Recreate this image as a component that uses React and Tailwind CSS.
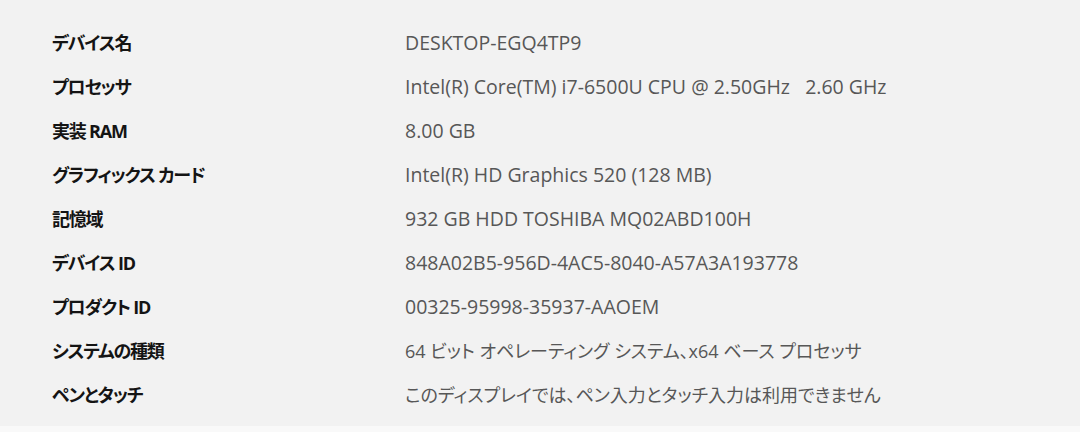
import React from "react";

const rows = [
  { k: "デバイス名", v: "DESKTOP-EGQ4TP9" },
  { k: "プロセッサ", v: "Intel(R) Core(TM) i7-6500U CPU @ 2.50GHz   2.60 GHz" },
  { k: "実装 RAM", v: "8.00 GB" },
  { k: "グラフィックス カード", v: "Intel(R) HD Graphics 520 (128 MB)" },
  { k: "記憶域", v: "932 GB HDD TOSHIBA MQ02ABD100H" },
  { k: "デバイス ID", v: "848A02B5-956D-4AC5-8040-A57A3A193778" },
  { k: "プロダクト ID", v: "00325-95998-35937-AAOEM" },
  { k: "システムの種類", v: "64 ビット オペレーティング システム、x64 ベース プロセッサ", jp: true },
  { k: "ペンとタッチ", v: "このディスプレイでは、ペン入力とタッチ入力は利用できません", jp: true },
];

function Row({ k, v, jp }) {
  return (
    <div className="flex items-center h-[44px]">
      <div className="w-[353px] shrink-0 text-[18px] font-bold text-[#141414] tracking-[-1.2px] [font-feature-settings:'palt'] font-['Open_Sans','Noto_Sans_CJK_JP',sans-serif]">
        {k}
      </div>
      <div
        className={
          jp
            ? "text-[18px] text-[#575757] whitespace-pre [font-feature-settings:'palt'] font-['Open_Sans','Noto_Sans_CJK_JP',sans-serif]"
            : "text-[19.5px] text-[#575757] whitespace-pre font-['Open_Sans','Noto_Sans_CJK_JP',sans-serif]"
        }
      >
        {v}
      </div>
    </div>
  );
}

export default function App() {
  return (
    <div className="w-[1080px] h-[432px] bg-[#f2f2f2] flex flex-col overflow-hidden">
      <div className="flex-1 pt-[21px] pl-[52px]">
        {rows.map((r) => (
          <Row key={r.k} {...r} />
        ))}
      </div>
      <div className="h-[6px] bg-[#f9f9f9]" />
    </div>
  );
}
